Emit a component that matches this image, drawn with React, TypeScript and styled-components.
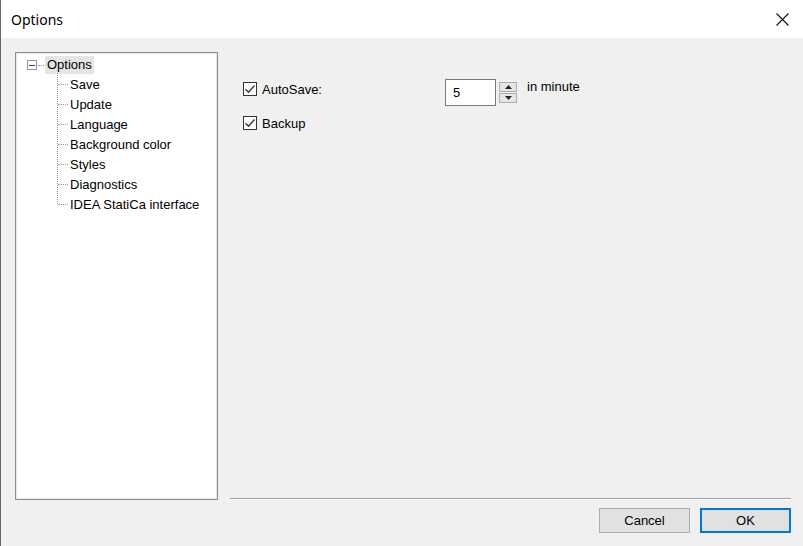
import React from "react";
import styled, { createGlobalStyle } from "styled-components";

const Global = createGlobalStyle`
  html, body { margin: 0; padding: 0; }
  body { width: 803px; height: 546px; overflow: hidden; background: #f0f0f0; }
  #root { width: 803px; height: 546px; }
  * { box-sizing: border-box; }
`;

const Window = styled.div`
  width: 803px;
  height: 546px;
  display: flex;
  flex-direction: column;
  background: #f0f0f0;
  border-left: 1px solid #6a6a6a;
  font-family: "Liberation Sans", Arial, sans-serif;
  font-size: 13px;
  color: #000;
`;

const TitleBar = styled.div`
  height: 38px;
  flex: none;
  background: #fff;
  display: flex;
  align-items: center;
  justify-content: space-between;
  padding: 0 14px 0 10px;
`;

const Title = styled.div`
  font-family: "Noto Sans", "Open Sans", sans-serif;
  font-size: 14px;
  color: #000;
`;

const CloseBtn = styled.div`
  width: 14px;
  height: 14px;
  display: flex;
  align-items: center;
  justify-content: center;
`;

const Main = styled.div`
  flex: none;
  height: 462px;
  display: flex;
  padding: 14px 12px 0 14px;
`;

const TreePanel = styled.div`
  width: 203px;
  height: 448px;
  background: #fff;
  border: 1px solid #8e8e8e;
  box-shadow: inset 0 0 0 1px #e6e6e6;
  padding-top: 3px;
`;

const RootRow = styled.div`
  height: 18px;
  display: flex;
  align-items: center;
  padding-left: 11px;
`;

const ExpandBox = styled.div`
  width: 10px;
  height: 10px;
  border: 1px solid #939393;
  background: #fff;
  display: flex;
  align-items: center;
  justify-content: center;
  &::after {
    content: "";
    width: 6px;
    height: 1px;
    background: #2b4a73;
  }
`;

const HDots = styled.div<{ $w: number }>`
  width: ${(p) => p.$w}px;
  border-top: 1px dotted #9a9a9a;
  margin: 0 1px;
`;

const Selected = styled.div`
  background: #e5e5e5;
  padding: 1px 2px;
  line-height: 16px;
`;

const Children = styled.ul`
  list-style: none;
  margin: 0;
  padding: 0 0 0 41px;
`;

const Child = styled.li<{ $last?: boolean }>`
  position: relative;
  height: 20px;
  display: flex;
  align-items: center;
  padding-left: 13px;
  &::before {
    content: "";
    position: absolute;
    left: 0;
    top: -1px;
    height: ${(p) => (p.$last ? "11px" : "21px")};
    border-left: 1px dotted #9a9a9a;
  }
  &::after {
    content: "";
    position: absolute;
    left: 1px;
    top: 10px;
    width: 10px;
    border-top: 1px dotted #9a9a9a;
  }
`;

const RightPane = styled.div`
  flex: 1;
  margin-left: 12px;
  display: flex;
  flex-direction: column;
`;

const Settings = styled.div`
  flex: 1;
  padding: 27px 0 0 13px;
  display: flex;
  flex-direction: column;
  gap: 7px;
`;

const SettingRow = styled.div`
  display: flex;
  align-items: flex-start;
`;

const CheckLabel = styled.label<{ $w?: number }>`
  display: flex;
  align-items: center;
  gap: 5px;
  width: ${(p) => (p.$w ? `${p.$w}px` : "auto")};
  height: 20px;
  color: #000;
`;

const Box = styled.span`
  width: 14px;
  height: 14px;
  border: 1px solid #333;
  background: #fff;
  display: flex;
  align-items: center;
  justify-content: center;
`;

const SpinWrap = styled.div`
  display: flex;
  align-items: center;
  gap: 3px;
`;

const NumInput = styled.div`
  width: 51px;
  height: 27px;
  background: #fff;
  border: 1px solid #7a7a7a;
  display: flex;
  align-items: center;
  padding-left: 7px;
`;

const SpinButtons = styled.div`
  display: flex;
  flex-direction: column;
  gap: 1px;
`;

const SpinBtn = styled.div`
  width: 18px;
  height: 10px;
  background: #e6e6e6;
  border: 1px solid #adadad;
  display: flex;
  align-items: center;
  justify-content: center;
`;

const Unit = styled.span`
  margin-left: 10px;
  line-height: 15px;
  margin-top: 0px;
`;

const Separator = styled.div`
  height: 2px;
  border-top: 1px solid #a0a0a0;
  border-bottom: 1px solid #fff;
`;

const Footer = styled.div`
  display: flex;
  justify-content: flex-end;
  gap: 10px;
  padding: 8px 12px 0 0;
`;

const Button = styled.button<{ $default?: boolean }>`
  width: 91px;
  height: 25px;
  background: #e1e1e1;
  border: ${(p) => (p.$default ? "2px solid #0078d7" : "1px solid #adadad")};
  font-family: "Liberation Sans", Arial, sans-serif;
  font-size: 13px;
  color: #000;
  padding: 0;
`;

const Check = () => (
  <Box>
    <svg width="12" height="12" viewBox="0 0 12 12">
      <path d="M1.5 6.2 L4.5 9.2 L10.5 2.5" fill="none" stroke="#333" strokeWidth="1.3" />
    </svg>
  </Box>
);

const Arrow = ({ up }: { up?: boolean }) => (
  <svg width="7" height="4" viewBox="0 0 7 4">
    <path d={up ? "M0 4 L3.5 0 L7 4 Z" : "M0 0 L3.5 4 L7 0 Z"} fill="#222" />
  </svg>
);

const items = [
  "Save",
  "Update",
  "Language",
  "Background color",
  "Styles",
  "Diagnostics",
  "IDEA StatiCa interface",
];

export default function App() {
  return (
    <>
      <Global />
      <Window>
        <TitleBar>
          <Title>Options</Title>
          <CloseBtn>
            <svg width="13" height="13" viewBox="0 0 13 13">
              <path d="M0.5 0.5 L12.5 12.5 M12.5 0.5 L0.5 12.5" stroke="#111" strokeWidth="1.1" />
            </svg>
          </CloseBtn>
        </TitleBar>
        <Main>
          <TreePanel>
            <RootRow>
              <ExpandBox />
              <HDots $w={6} />
              <Selected>Options</Selected>
            </RootRow>
            <Children>
              {items.map((it, i) => (
                <Child key={it} $last={i === items.length - 1}>
                  {it}
                </Child>
              ))}
            </Children>
          </TreePanel>
          <RightPane>
            <Settings>
              <SettingRow>
                <CheckLabel $w={202}>
                  <Check />
                  AutoSave:
                </CheckLabel>
                <SpinWrap>
                  <NumInput>5</NumInput>
                  <SpinButtons>
                    <SpinBtn>
                      <Arrow up />
                    </SpinBtn>
                    <SpinBtn>
                      <Arrow />
                    </SpinBtn>
                  </SpinButtons>
                </SpinWrap>
                <Unit>in minute</Unit>
              </SettingRow>
              <SettingRow>
                <CheckLabel>
                  <Check />
                  Backup
                </CheckLabel>
              </SettingRow>
            </Settings>
            <Separator />
          </RightPane>
        </Main>
        <Footer>
          <Button>Cancel</Button>
          <Button $default>OK</Button>
        </Footer>
      </Window>
    </>
  );
}
